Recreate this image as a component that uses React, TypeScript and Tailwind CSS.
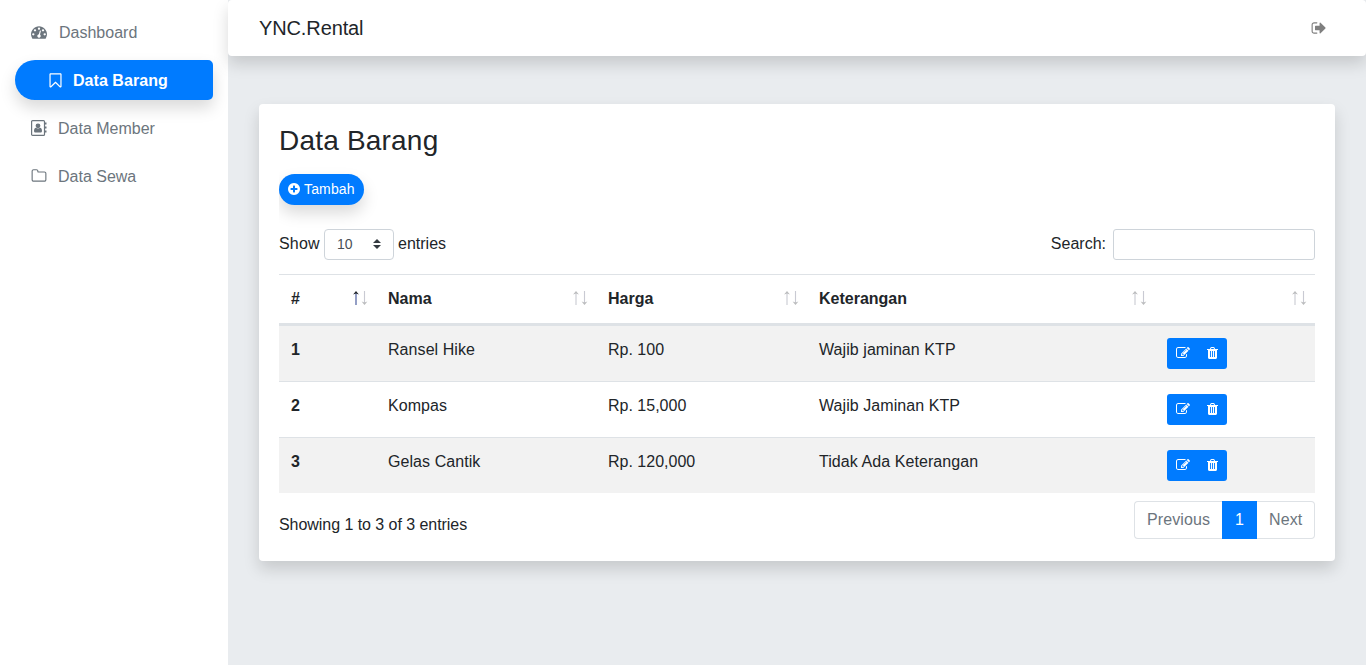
import type { ReactNode } from "react";

const icons = {
  signOut:
    "M704 1440q0 4 1 20t.5 26.5-3 23.5-10 19.5-20.5 6.5h-320q-119 0-203.5-84.5t-84.5-203.5v-704q0-119 84.5-203.5t203.5-84.5h320q13 0 22.5 9.5t9.5 22.5q0 4 1 20t.5 26.5-3 23.5-10 19.5-20.5 6.5h-320q-66 0-113 47t-47 113v704q0 66 47 113t113 47h312l11.5 1 11.5 3 8 5.5 7 9 2 13.5zm928-544q0 26-19 45l-544 544q-19 19-45 19t-45-19-19-45v-288h-448q-26 0-45-19t-19-45v-384q0-26 19-45t45-19h448v-288q0-26 19-45t45-19 45 19l544 544q19 19 19 45z",
  dashboard:
    "M384 1152q0-53-37.5-90.5t-90.5-37.5-90.5 37.5-37.5 90.5 37.5 90.5 90.5 37.5 90.5-37.5 37.5-90.5zm192-448q0-53-37.5-90.5t-90.5-37.5-90.5 37.5-37.5 90.5 37.5 90.5 90.5 37.5 90.5-37.5 37.5-90.5zm428 481l101-382q6-26-7.5-48.5t-38.5-29.5-48 6.5-30 39.5l-101 382q-60 5-107 43.5t-63 98.5q-20 77 20 146t117 89 146-20 89-117q16-60-6-117t-72-91zm660-33q0-53-37.5-90.5t-90.5-37.5-90.5 37.5-37.5 90.5 37.5 90.5 90.5 37.5 90.5-37.5 37.5-90.5zm-640-640q0-53-37.5-90.5t-90.5-37.5-90.5 37.5-37.5 90.5 37.5 90.5 90.5 37.5 90.5-37.5 37.5-90.5zm448 192q0-53-37.5-90.5t-90.5-37.5-90.5 37.5-37.5 90.5 37.5 90.5 90.5 37.5 90.5-37.5 37.5-90.5zm320 448q0 261-141 483-19 29-54 29h-1402q-35 0-54-29-141-221-141-483 0-182 71-348t191-286 286-191 348-71 348 71 286 191 191 286 71 348z",
  edit: "M888 1184l116-116-152-152-116 116v56h96v96h56zm440-720q-16-16-33 1l-350 350q-17 17-1 33t33-1l350-350q17-17 1-33zm80 594v190q0 119-84.5 203.5t-203.5 84.5h-832q-119 0-203.5-84.5t-84.5-203.5v-832q0-119 84.5-203.5t203.5-84.5h832q63 0 117 25 15 7 18 23 3 17-9 29l-49 49q-14 14-32 8-23-6-45-6h-832q-66 0-113 47t-47 113v832q0 66 47 113t113 47h832q66 0 113-47t47-113v-126q0-13 9-22l64-64q15-15 35-7t20 29zm-96-738l288 288-672 672h-288v-288zm444 132l-92 92-288-288 92-92q28-28 68-28t68 28l152 152q28 28 28 68t-28 68z",
  bookmark:
    "M1408 256h-1024v1242l423-406 89-85 89 85 423 406v-1242zm12-128q23 0 44 9 33 13 52.5 41t19.5 62v1289q0 34-19.5 62t-52.5 41q-19 8-44 8-48 0-83-32l-441-424-441 424q-36 33-83 33-23 0-44-9-33-13-52.5-41t-19.5-62v-1289q0-34 19.5-62t52.5-41q21-9 44-9h1048z",
  folder:
    "M1600 1312v-704q0-40-28-68t-68-28h-704q-40 0-68-28t-28-68v-64q0-40-28-68t-68-28h-320q-40 0-68 28t-28 68v960q0 40 28 68t68 28h1216q40 0 68-28t28-68zm128-704v704q0 92-66 158t-158 66h-1216q-92 0-158-66t-66-158v-960q0-92 66-158t158-66h320q92 0 158 66t66 158v32h672q92 0 158 66t66 158z",
  plus: "M1344 960v-128q0-26-19-45t-45-19h-256v-256q0-26-19-45t-45-19h-128q-26 0-45 19t-19 45v256h-256q-26 0-45 19t-19 45v128q0 26 19 45t45 19h256v256q0 26 19 45t45 19h128q26 0 45-19t19-45v-256h256q26 0 45-19t19-45zm320-64q0 209-103 385.5t-279.5 279.5-385.5 103-385.5-103-279.5-279.5-103-385.5 103-385.5 279.5-279.5 385.5-103 385.5 103 279.5 279.5 103 385.5z",
};

function Icon({ name, className }: { name: keyof typeof icons; className: string }) {
  return (
    <svg viewBox="0 0 1792 1792" fill="currentColor" className={className}>
      <path d={icons[name]} />
    </svg>
  );
}

function Trash() {
  return (
    <svg viewBox="0 0 11 12" fill="currentColor" className="mb-px ml-[17px] h-3 w-[11px]">
      <path
        fillRule="evenodd"
        d="M3.200 1.200C3.500.4 3.900 0 4.600 0h1.800c.7 0 1.100.4 1.400 1.200L8.100 2H11v1h-1v7.600c0 .8-.5 1.400-1.200 1.400H2.200C1.500 12 1 11.400 1 10.600V3H0V2h2.900zM4 2h3l-.4-1H4.400zM3 4v6h.9V4zm2.050 0v6h.9V4zM7.100 4v6H8V4z"
      />
    </svg>
  );
}

function AddressBook() {
  return (
    <svg viewBox="0 0 16 16" fill="none" className="size-4">
      <rect x="0.6" y="0.6" width="12.9" height="14.8" rx="1" stroke="currentColor" strokeWidth="1.2" />
      <path d="M14 2.500h1.500v2H14zM14 6.500h1.500v2H14zM14 10.500h1.500v2H14z" fill="currentColor" />
      <circle cx="7" cy="5.8" r="2.400" fill="currentColor" />
      <path
        d="M5 7.700C3.600 7.900 3 9.100 3 11c0 .9.500 1.500 1.300 1.500h5.400c.8 0 1.300-.6 1.300-1.500C11 9.100 10.400 7.900 9 7.700c-1.100 1.100-2.900 1.100-4 0z"
        fill="currentColor"
      />
    </svg>
  );
}

function NavItem({ icon, gap, children }: { icon: ReactNode; gap: string; children: ReactNode }) {
  return (
    <a className={`flex h-10 items-center px-4 text-[#6c757d] ${gap}`}>
      {icon}
      <span className="pt-0.5">{children}</span>
    </a>
  );
}

function SortArrows({ sorted }: { sorted?: boolean }) {
  return (
    <svg viewBox="0 0 16 14" className="absolute right-2 bottom-[18px] h-[14px] w-4">
      <g opacity={sorted ? 1 : 0.3}>
        <path d="M4 1v13" stroke={sorted ? "#3c4f96" : "#50536f"} strokeWidth="1.100" />
        <path d="M4 0l2.900 3.600L4 2.500 1.100 3.600z" fill="#212529" />
      </g>
      <g opacity="0.3">
        <path d="M12.500 0v13" stroke="#50536f" strokeWidth="1.100" />
        <path d="M12.500 14l2.900-3.600-2.900 1.100-2.900-1.100z" fill="#212529" />
      </g>
    </svg>
  );
}

function HeadCell({ label, width, sorted }: { label: string; width: string; sorted?: boolean }) {
  return (
    <th className={`relative h-[51px] border-t border-b-2 border-[#dee2e6] p-3 text-left align-bottom font-bold ${width}`}>
      {label}
      <SortArrows sorted={sorted} />
    </th>
  );
}

const rows = [
  ["1", "Ransel Hike", "Rp. 100", "Wajib jaminan KTP"],
  ["2", "Kompas", "Rp. 15,000", "Wajib Jaminan KTP"],
  ["3", "Gelas Cantik", "Rp. 120,000", "Tidak Ada Keterangan"],
];

export default function App() {
  return (
    <div className="flex h-[665px] w-[1366px] overflow-hidden bg-[#e9ecef] font-['Liberation_Sans',Arial,sans-serif] text-base text-[#212529]">
      <aside className="flex w-[228px] shrink-0 flex-col gap-2 bg-white px-[15px] pt-3">
        <NavItem icon={<Icon name="dashboard" className="size-4" />} gap="gap-3">
          Dashboard
        </NavItem>
        <a className="flex h-10 items-center rounded-l-[20px] rounded-r-[5px] bg-[#007bff] pl-8 font-bold text-white shadow-[0_8px_16px_rgba(0,0,0,0.15)]">
          <Icon name="bookmark" className="mr-[9px] size-[17px]" />
          <span className="pt-0.5 tracking-[0.05px]">Data Barang</span>
        </a>
        <NavItem icon={<AddressBook />} gap="gap-[11px]">
          Data Member
        </NavItem>
        <NavItem icon={<Icon name="folder" className="-ml-[0.5px] mr-[0.5px] size-4" />} gap="gap-[11px]">
          Data Sewa
        </NavItem>
      </aside>

      <main className="flex flex-1 flex-col">
        <header className="flex h-14 items-center justify-between rounded bg-white pr-[39px] pl-[31px] shadow-[0_8px_16px_rgba(0,0,0,0.15)]">
          <span className="text-xl tracking-[-0.12px]">YNC.Rental</span>
          <Icon name="signOut" className="size-4 text-black/50" />
        </header>

        <section className="mx-[31px] mt-12 h-[457px] rounded bg-white p-5 shadow-[0_8px_16px_rgba(0,0,0,0.15)]">
          <div className="h-full overflow-hidden">
            <h3 className="text-[28px] leading-[34px] tracking-[0.2px]">Data Barang</h3>
            <button className="mt-4 flex h-[31px] w-[85px] items-center gap-[3px] rounded-full bg-[#007bff] pl-2 text-sm text-white shadow-[0_8px_16px_rgba(0,0,0,0.15)]">
              <Icon name="plus" className="mb-px size-[14px]" />
              <span className="pb-0.5 tracking-[0.15px]">Tambah</span>
            </button>

            <div className="mt-6 flex h-[31px] items-center justify-between">
              <label className="flex items-center gap-1">
                <span className="w-[41px] pb-0.5 tracking-[0.2px]">Show</span>
                <span className="flex h-[31px] w-[70px] items-center justify-between rounded border border-[#ced4da] px-3 text-sm text-[#495057]">
                  <span className="pb-0.5">10</span>
                  <svg viewBox="0 0 4 5" className="mb-px h-[10px] w-2 fill-[#343a40]">
                    <path d="M2 0L0 2h4zm0 5L0 3h4z" />
                  </svg>
                </span>
                <span className="pb-0.5">entries</span>
              </label>
              <label className="flex items-center gap-[7px]">
                <span className="pb-0.5">Search:</span>
                <input className="h-[31px] w-[202px] rounded-[3px] border border-[#ced4da] bg-white px-2 text-sm" />
              </label>
            </div>

            <table className="mt-[14px] w-[1036px] table-fixed border-separate border-spacing-0">
              <thead>
                <tr>
                  <HeadCell label="#" width="w-[97px]" sorted />
                  <HeadCell label="Nama" width="w-[220px]" />
                  <HeadCell label="Harga" width="w-[211px]" />
                  <HeadCell label="Keterangan" width="w-[348px]" />
                  <HeadCell label="" width="w-[160px]" />
                </tr>
              </thead>
              <tbody>
                {rows.map((row) => (
                  <tr key={row[0]} className="h-14 odd:bg-[#f2f2f2]">
                    {row.map((cell, i) => (
                      <td
                        key={i}
                        className={`border-t border-[#dee2e6] px-3 py-3 align-top first:font-bold ${
                          i % 2 === 1 ? "tracking-[0.07px]" : ""
                        }`}
                      >
                        {cell}
                      </td>
                    ))}
                    <td className="border-t border-[#dee2e6] p-3 align-top">
                      <div className="flex h-[31px] w-[60px] items-center rounded-[3px] bg-[#007bff] pl-[9px] text-white">
                        <Icon name="edit" className="mb-0.5 size-[14px]" />
                        <Trash />
                      </div>
                    </td>
                  </tr>
                ))}
              </tbody>
            </table>

            <div className="flex justify-between pt-2">
              <p className="pt-3 tracking-[-0.05px]">Showing 1 to 3 of 3 entries</p>
              <div className="flex h-[38px] w-[181px] leading-9 text-[#6c757d]">
                <span className="w-[88px] rounded-l border border-r-0 border-[#dee2e6] pl-3 tracking-[0.1px]">Previous</span>
                <span className="w-[35px] border border-[#007bff] bg-[#007bff] text-center text-white">1</span>
                <span className="w-[58px] rounded-r border border-l-0 border-[#dee2e6] pl-3 tracking-[0.1px]">Next</span>
              </div>
            </div>
          </div>
        </section>
      </main>
    </div>
  );
}
